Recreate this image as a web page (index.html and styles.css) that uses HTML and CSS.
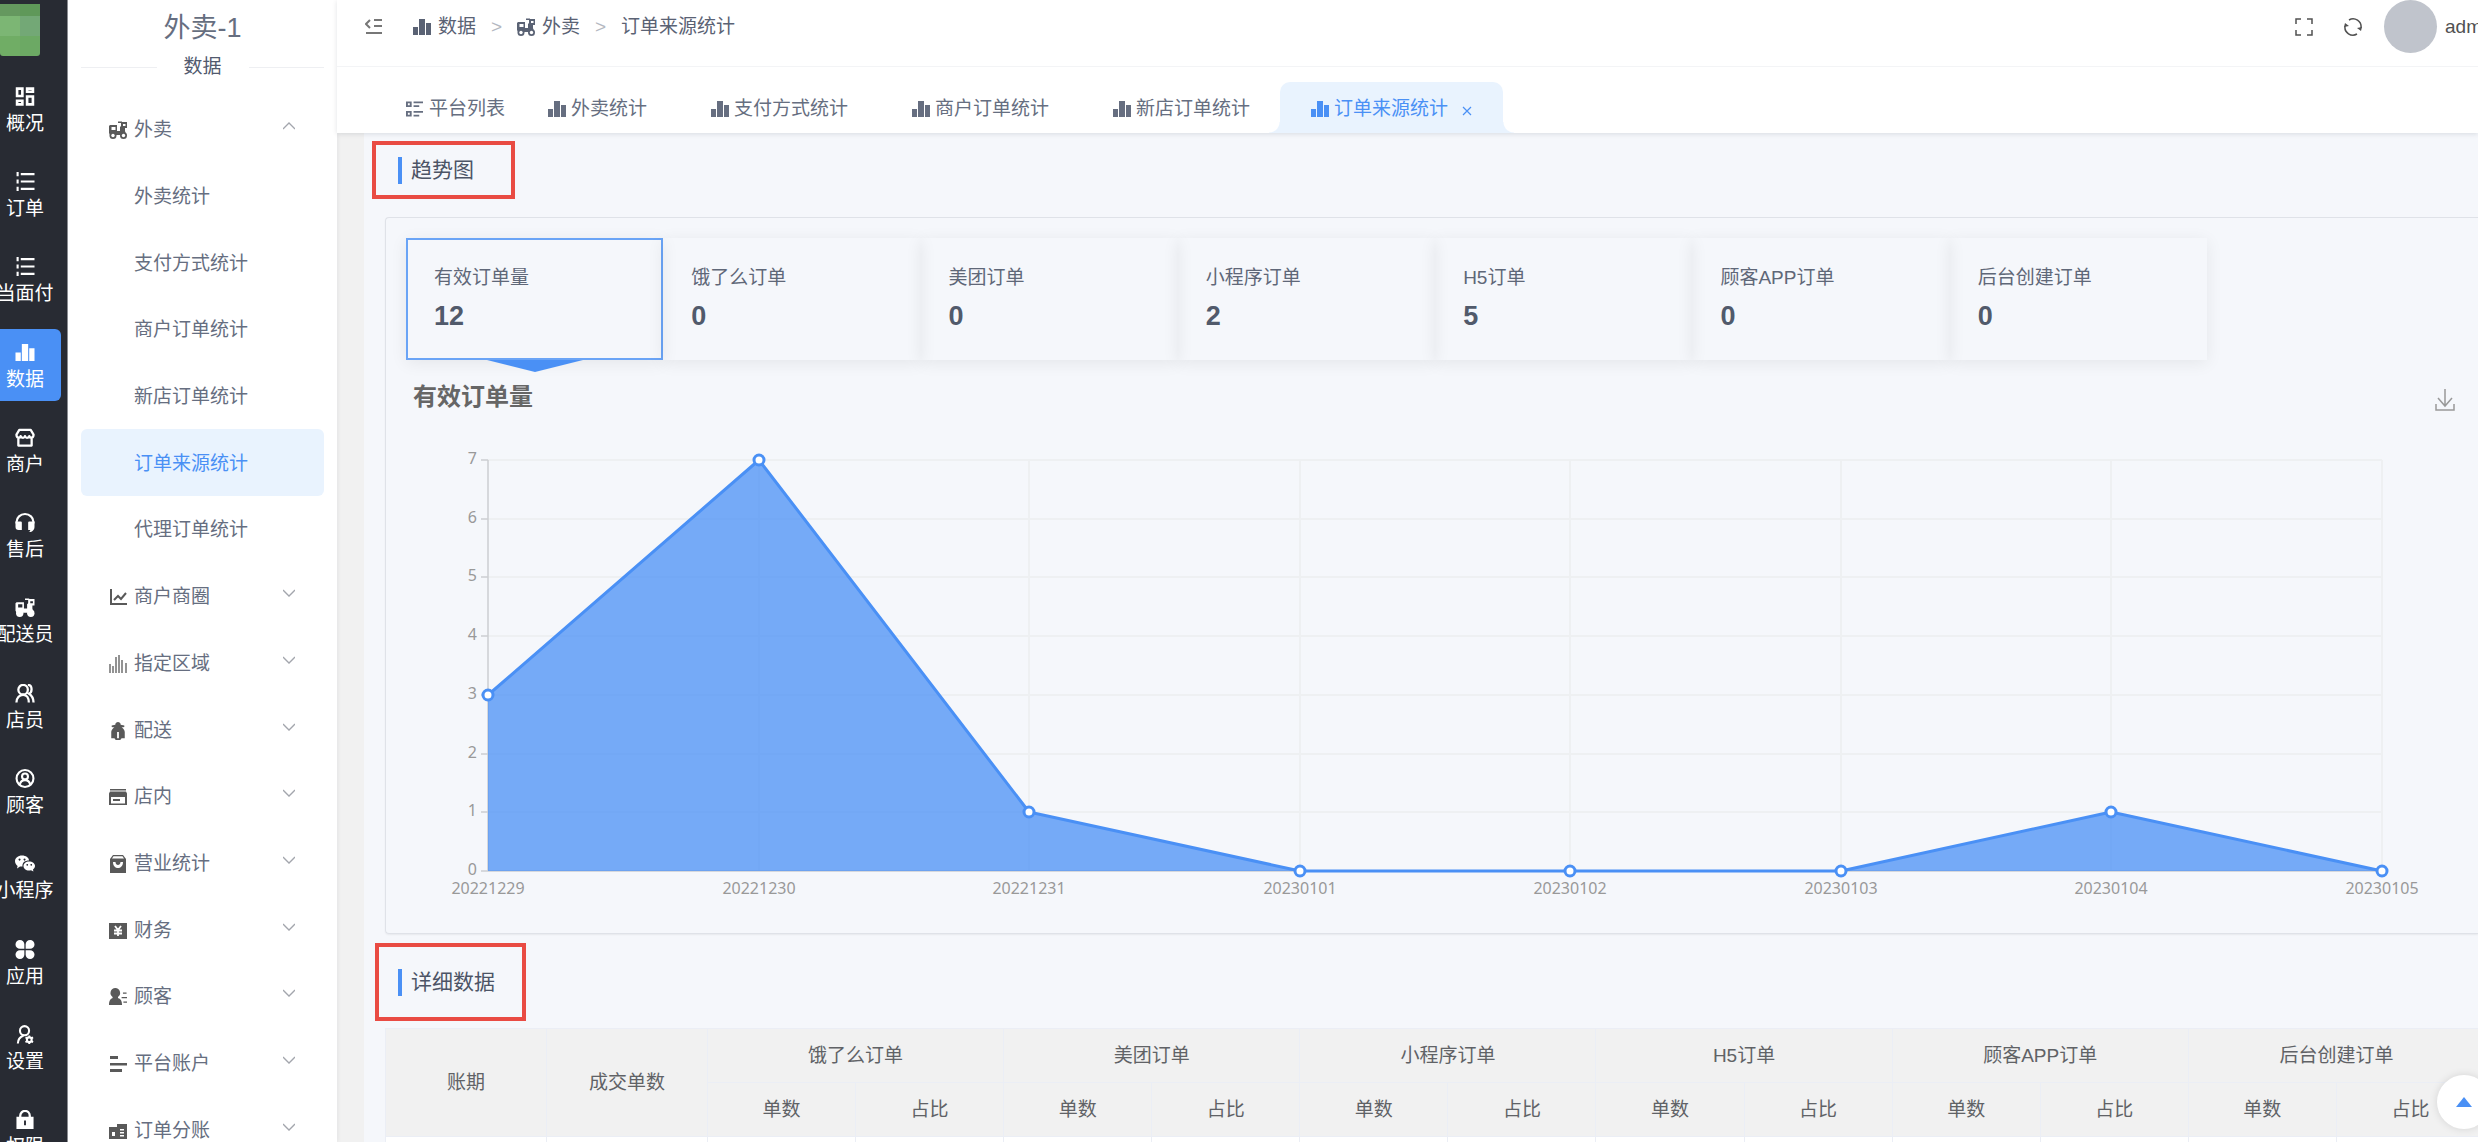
FILE: index.html
```html
<!DOCTYPE html>
<html lang="zh-CN">
<head>
<meta charset="utf-8">
<title>订单来源统计</title>
<link rel="stylesheet" href="styles.css">
</head>
<body>
<svg class="sprite" aria-hidden="true">
  <symbol id="i-grid" viewBox="0 0 18 18"><g fill="none" stroke="currentColor" stroke-width="2.500"><path d="M1.500 1.500h5v7h-5zM11 1.500h5.500v3H11zM1.500 13h5v3.500h-5zM11 9h5.500v7.500H11z"/></g></symbol>
  <symbol id="i-list" viewBox="0 0 18 18"><path fill="currentColor" d="M1 0h2v4H1zM5 1h13v2H5zM1 7h2v4H1zM5 8h13v2H5zM1 14h2v4H1zM5 15h13v2H5z"/></symbol>
  <symbol id="i-bars" viewBox="0 0 18 18"><path fill="currentColor" d="M0 9h5v8H0zM6 1h6v16H6zM13 5h5v12h-5z"/></symbol>
  <symbol id="i-shop" viewBox="0 0 20 20"><g fill="none" stroke="currentColor" stroke-width="2.400" stroke-linejoin="round"><path d="M4 2h12l3 5c0 4-4 4-4.500 1.500C13.500 11 10.500 11 10 8.500 9.500 11 6.500 11 5.500 8.500 5 11 1 11 1 7zM3 11v7.500h14V11"/></g></symbol>
  <symbol id="i-headset" viewBox="0 0 18 18"><path fill="none" stroke="currentColor" stroke-width="2" d="M1 10V8.500a8 7.500 0 0 1 16 0V10"/><path fill="currentColor" d="M0 8h5a1 1 0 0 1 1 1v7H3a3 3 0 0 1-3-3zM18 8h-5a1 1 0 0 0-1 1v7h2c0 2-2 2-2 2h1c3 0 5-2 5-5z"/></symbol>
  <symbol id="i-scooter" viewBox="0 0 18 18"><path fill="currentColor" fill-rule="evenodd" d="M1 4h7v6h3V6l1-1V2H9V.5h4V1h5v6h-2v3l1 4H1L0 12V5zM2.500 6v3h4V6zM14 3v2h2.500V3z"/><circle cx="4" cy="14.500" r="3.500" fill="currentColor"/><circle cx="14.500" cy="14.500" r="3.500" fill="currentColor"/><circle class="hub" cx="4" cy="14.500" r="1.700"/><circle class="hub" cx="14.500" cy="14.500" r="1.700"/></symbol>
  <symbol id="i-users" viewBox="0 0 20 20"><g fill="none" stroke="currentColor" stroke-width="2.400"><circle cx="8" cy="6" r="5"/><path d="M1 19.500c0-5 3-8 7-8s6 3 6 8M13 1c5 0 5 8 1 9 3 2 5 4 5 9.500"/></g></symbol>
  <symbol id="i-user-circle" viewBox="0 0 18 18"><g fill="none" stroke="currentColor" stroke-width="2"><circle cx="9" cy="9" r="8"/><circle cx="9" cy="7" r="2.800"/><path d="M4 15c1-6 9-6 10 0"/></g></symbol>
  <symbol id="i-wechat" viewBox="0 0 20 18"><path fill="currentColor" fill-rule="evenodd" d="M7 1c4 0 7 2.300 7 5-4 0-7 2-6.500 6H5l-3 2 .6-2.500C1 10.500 0 8.500 0 6.800 0 3.500 3 1 7 1zM4.500 4a1 1 0 1 0 .1 0zM9.500 4a1 1 0 1 0 .1 0zM14 7c3.500 0 6 2 6 4.500 0 1.500-1 2.700-2 3.500l.4 2-2.400-1.200C12 17 8.500 14.500 8.500 11.500 8.500 9 11 7 14 7zM12.200 9.500a.8.8 0 1 0 .1 0zM16.200 9.500a.8.8 0 1 0 .1 0z"/></symbol>
  <symbol id="i-apps" viewBox="0 0 18 18"><path fill="currentColor" d="M4.200 0a4.200 4.200 0 0 1 4.200 4.200v4.200H4.200a4.200 4.200 0 0 1 0-8.400zM13.800 0a4.200 4.200 0 0 1 0 8.400H9.600V4.200A4.200 4.200 0 0 1 13.800 0zM4.200 9.600h4.200v4.200a4.200 4.200 0 1 1-4.200-4.200zM9.600 9.600h4.200a4.200 4.200 0 1 1-4.200 4.200z"/></symbol>
  <symbol id="i-user-cog" viewBox="0 0 18 20"><g fill="none" stroke="currentColor" stroke-width="2.200"><circle cx="8.500" cy="6" r="4.800"/><path d="M1.500 19.500c0-4 2-7 6-8.500"/><circle cx="13.500" cy="15.500" r="2.500"/></g><path stroke="currentColor" stroke-width="2" d="M13.500 11v2M13.500 18v2M9.500 13l2 1M15.500 17l2 1M17.500 13l-2 1M11.500 17l-2 1"/></symbol>
  <symbol id="i-lock" viewBox="0 0 18 20"><path fill="none" stroke="currentColor" stroke-width="2.400" d="M4 9V6a5 5 0 0 1 10 0v3"/><path fill="currentColor" fill-rule="evenodd" d="M0 7h18v13H0zM8 11v5h2v-5z"/></symbol>
  <symbol id="i-trend" viewBox="0 0 18 18"><path fill="none" stroke="currentColor" stroke-width="2" d="M2 1v15h16M5 12l4-4 3 3 5-6"/></symbol>
  <symbol id="i-columns" viewBox="0 0 18 18"><path fill="currentColor" opacity=".65" d="M0 9h2v9H0zM3 11h2v7H3zM6 2h2v16H6zM9 0h2v18H9zM12 5h2v13h-2zM16 8h2v10h-2z"/></symbol>
  <symbol id="i-courier" viewBox="0 0 18 20"><path fill="currentColor" fill-rule="evenodd" d="M6 3c0-4 6-4 6 0l4 1v1.500l-3 .5c2 1 3.500 3 3.500 5v7H13l-1.500 2h-5L5 18H1.500v-7c0-2 1.500-4 3.500-5l-3-.5V4zM8 11v7h2v-7z"/></symbol>
  <symbol id="i-card" viewBox="0 0 18 18"><path fill="currentColor" fill-rule="evenodd" d="M1 1h16v1.500H1zM1 3.500h16l1 2V17H0V5.500zM2 9v6.500h14V9zM4 11h7v2H4z"/></symbol>
  <symbol id="i-bag" viewBox="0 0 18 18"><path fill="currentColor" fill-rule="evenodd" d="M4 0h10l3 4v14H1V4zM4.500 1.200L3 3.500h12l-1.500-2.300zM4 7h2.500c0 4 5 4 5 0H14c0 8-10 8-10 0z"/></symbol>
  <symbol id="i-yen" viewBox="0 0 18 18"><path fill="currentColor" d="M0 1h18v16H0z"/><path fill="none" stroke="#fff" stroke-width="1.800" d="M6 4l3 4 3-4M9 8v6M5 8.500h8M5 11.500h8"/></symbol>
  <symbol id="i-member" viewBox="0 0 20 20"><path fill="currentColor" d="M7 0a5.500 5.500 0 0 1 3 10v1c3 1 4.500 3 4.500 8H0c0-5 1.500-7 4-8v-1A5.500 5.500 0 0 1 7 0zM15.500 5h4v1.500h-4zM14 10h6v1.500h-6zM16 15h4v1.500h-4z"/></symbol>
  <symbol id="i-lines" viewBox="0 0 18 18"><path fill="currentColor" d="M1 1h8v3H1zM1 8h17v2.500H1zM1 14h12v3H1z"/></symbol>
  <symbol id="i-split" viewBox="0 0 18 18"><path fill="currentColor" fill-rule="evenodd" d="M0 5h8V2h10v15H0zM3 10v4h3v-4zM11 7v1.500h4V7zM11 10v1.500h4V10zM11 13v1.500h4V13z"/></symbol>
  <symbol id="i-fold" viewBox="0 0 18 16"><path fill="none" stroke="currentColor" stroke-width="2" d="M5 1L1 5l4 4M9 1h8M9 7h8M1 14h16"/></symbol>
  <symbol id="i-platform" viewBox="0 0 18 18"><path fill="none" stroke="currentColor" stroke-width="2" d="M1 2h4v4H1zM1 12h4v4H1zM8 2h10M8 6h6M8 12h10M8 16h6"/></symbol>
  <symbol id="i-full" viewBox="0 0 18 18"><path fill="none" stroke="currentColor" stroke-width="1.500" d="M1 6V1h5M12 1h5v5M17 12v5h-5M6 17H1v-5"/></symbol>
  <symbol id="i-refresh" viewBox="0 0 18 18"><path fill="none" stroke="currentColor" stroke-width="1.500" d="M5 2a8 8 0 0 1 12 8M13 16A8 8 0 0 1 1 8"/><path fill="currentColor" d="M0 9l1-4 4 3zM18 9l-1 4-4-3z"/></symbol>
  <symbol id="i-down" viewBox="0 0 12 8"><path fill="none" stroke="currentColor" stroke-width="1.300" d="M0 1l6 6 6-6"/></symbol>
  <symbol id="i-up" viewBox="0 0 12 8"><path fill="none" stroke="currentColor" stroke-width="1.300" d="M0 7l6-6 6 6"/></symbol>
  <symbol id="i-close" viewBox="0 0 10 10"><path fill="none" stroke="currentColor" stroke-width="1.200" d="M1 1l8 8M9 1L1 9"/></symbol>
  <symbol id="i-download" viewBox="0 0 20 22"><path fill="none" stroke="currentColor" stroke-width="1.500" d="M10 0v17M3 9l7 8 7-8M1 15v6h18v-6"/></symbol>
</svg>

<div class="app">
  <nav class="rail" aria-label="主导航">
    <div class="logo"><i></i><i></i><i></i><i></i><i></i><i></i></div>
    <ul class="rail-list">
      <li><a class="rail-item" href="#"><svg class="icon"><use href="#i-grid"/></svg>概况</a></li>
      <li><a class="rail-item" href="#"><svg class="icon"><use href="#i-list"/></svg>订单</a></li>
      <li><a class="rail-item" href="#"><svg class="icon"><use href="#i-list"/></svg>当面付</a></li>
      <li><a class="rail-item active" href="#"><svg class="icon"><use href="#i-bars"/></svg>数据</a></li>
      <li><a class="rail-item" href="#"><svg class="icon"><use href="#i-shop"/></svg>商户</a></li>
      <li><a class="rail-item" href="#"><svg class="icon"><use href="#i-headset"/></svg>售后</a></li>
      <li><a class="rail-item" href="#"><svg class="icon"><use href="#i-scooter"/></svg>配送员</a></li>
      <li><a class="rail-item" href="#"><svg class="icon"><use href="#i-users"/></svg>店员</a></li>
      <li><a class="rail-item" href="#"><svg class="icon"><use href="#i-user-circle"/></svg>顾客</a></li>
      <li><a class="rail-item" href="#"><svg class="icon"><use href="#i-wechat"/></svg>小程序</a></li>
      <li><a class="rail-item" href="#"><svg class="icon"><use href="#i-apps"/></svg>应用</a></li>
      <li><a class="rail-item" href="#"><svg class="icon"><use href="#i-user-cog"/></svg>设置</a></li>
      <li><a class="rail-item" href="#"><svg class="icon"><use href="#i-lock"/></svg>权限</a></li>
    </ul>
  </nav>

  <aside class="side">
    <h1 class="side-title">外卖-1</h1>
    <div class="side-divider">数据</div>
    <ul class="menu">
      <li class="group-open">
        <button class="menu-row" type="button"><svg class="icon"><use href="#i-scooter"/></svg><span>外卖</span><svg class="chev"><use href="#i-up"/></svg></button>
        <ul class="submenu">
          <li><a class="sub-row" href="#">外卖统计</a></li>
          <li><a class="sub-row" href="#">支付方式统计</a></li>
          <li><a class="sub-row" href="#">商户订单统计</a></li>
          <li><a class="sub-row" href="#">新店订单统计</a></li>
          <li><a class="sub-row active" href="#">订单来源统计</a></li>
          <li><a class="sub-row" href="#">代理订单统计</a></li>
        </ul>
      </li>
      <li><button class="menu-row" type="button"><svg class="icon"><use href="#i-trend"/></svg><span>商户商圈</span><svg class="chev"><use href="#i-down"/></svg></button></li>
      <li><button class="menu-row" type="button"><svg class="icon"><use href="#i-columns"/></svg><span>指定区域</span><svg class="chev"><use href="#i-down"/></svg></button></li>
      <li><button class="menu-row" type="button"><svg class="icon"><use href="#i-courier"/></svg><span>配送</span><svg class="chev"><use href="#i-down"/></svg></button></li>
      <li><button class="menu-row" type="button"><svg class="icon"><use href="#i-card"/></svg><span>店内</span><svg class="chev"><use href="#i-down"/></svg></button></li>
      <li><button class="menu-row" type="button"><svg class="icon"><use href="#i-bag"/></svg><span>营业统计</span><svg class="chev"><use href="#i-down"/></svg></button></li>
      <li><button class="menu-row" type="button"><svg class="icon"><use href="#i-yen"/></svg><span>财务</span><svg class="chev"><use href="#i-down"/></svg></button></li>
      <li><button class="menu-row" type="button"><svg class="icon"><use href="#i-member"/></svg><span>顾客</span><svg class="chev"><use href="#i-down"/></svg></button></li>
      <li><button class="menu-row" type="button"><svg class="icon"><use href="#i-lines"/></svg><span>平台账户</span><svg class="chev"><use href="#i-down"/></svg></button></li>
      <li><button class="menu-row" type="button"><svg class="icon"><use href="#i-split"/></svg><span>订单分账</span><svg class="chev"><use href="#i-down"/></svg></button></li>
    </ul>
  </aside>

  <div class="main">
    <header class="header">
      <div class="topbar">
        <button class="fold" type="button" aria-label="收起菜单"><svg><use href="#i-fold"/></svg></button>
        <nav class="crumbs" aria-label="面包屑">
          <a href="#"><svg class="icon"><use href="#i-bars"/></svg>数据</a><span class="sep">&gt;</span>
          <a href="#"><svg class="icon"><use href="#i-scooter"/></svg>外卖</a><span class="sep">&gt;</span>
          <a href="#">订单来源统计</a>
        </nav>
        <div class="tools">
          <button type="button" aria-label="全屏"><svg class="icon"><use href="#i-full"/></svg></button>
          <button type="button" aria-label="刷新"><svg class="icon"><use href="#i-refresh"/></svg></button>
          <a class="account" href="#"><span class="avatar"></span>admin</a>
        </div>
      </div>
      <nav class="tabs" aria-label="页签">
        <a class="tab pinned" href="#"><svg class="icon"><use href="#i-platform"/></svg>平台列表</a>
        <a class="tab" href="#"><svg class="icon"><use href="#i-bars"/></svg>外卖统计<svg class="close"><use href="#i-close"/></svg></a>
        <a class="tab" href="#"><svg class="icon"><use href="#i-bars"/></svg>支付方式统计<svg class="close"><use href="#i-close"/></svg></a>
        <a class="tab" href="#"><svg class="icon"><use href="#i-bars"/></svg>商户订单统计<svg class="close"><use href="#i-close"/></svg></a>
        <a class="tab" href="#"><svg class="icon"><use href="#i-bars"/></svg>新店订单统计<svg class="close"><use href="#i-close"/></svg></a>
        <a class="tab active" href="#"><svg class="icon"><use href="#i-bars"/></svg>订单来源统计<svg class="close"><use href="#i-close"/></svg></a>
      </nav>
    </header>

    <main class="content">
      <h2 class="section-title marked">趋势图</h2>
      <section class="card">
        <div class="stats">
          <button class="stat active" type="button"><span>有效订单量</span><b>12</b></button>
          <button class="stat" type="button"><span>饿了么订单</span><b>0</b></button>
          <button class="stat" type="button"><span>美团订单</span><b>0</b></button>
          <button class="stat" type="button"><span>小程序订单</span><b>2</b></button>
          <button class="stat" type="button"><span>H5订单</span><b>5</b></button>
          <button class="stat" type="button"><span>顾客APP订单</span><b>0</b></button>
          <button class="stat" type="button"><span>后台创建订单</span><b>0</b></button>
        </div>
        <div class="chart-head">
          <h3>有效订单量</h3>
          <button type="button" aria-label="下载"><svg><use href="#i-download"/></svg></button>
        </div>
        <svg class="chart" viewBox="0 0 2072 512" role="img" aria-label="有效订单量趋势">
          <g class="grid-lines"><path d="M82 39H1976M82 98H1976M82 156H1976M82 215H1976M82 274H1976M82 333H1976M82 391H1976M353 39V450M623 39V450M894 39V450M1164 39V450M1435 39V450M1705 39V450M1976 39V450"/></g>
          <g class="axis-lines"><path d="M82 39V450H1976M75 39h7M75 98h7M75 156h7M75 215h7M75 274h7M75 333h7M75 391h7M75 450h7"/></g>
          <path class="area" d="M82 274L353 39 623 391 894 450H1435L1705 391 1976 450H82z"/>
          <path class="line" d="M82 274L353 39 623 391 894 450H1435L1705 391 1976 450"/>
          <g class="dots"><circle cx="82" cy="274" r="5"/><circle cx="353" cy="39" r="5"/><circle cx="623" cy="391" r="5"/><circle cx="894" cy="450" r="5"/><circle cx="1164" cy="450" r="5"/><circle cx="1435" cy="450" r="5"/><circle cx="1705" cy="391" r="5"/><circle cx="1976" cy="450" r="5"/></g>
          <g class="labels end"><text x="71" y="43">7</text><text x="71" y="102">6</text><text x="71" y="160">5</text><text x="71" y="219">4</text><text x="71" y="278">3</text><text x="71" y="337">2</text><text x="71" y="395">1</text><text x="71" y="454">0</text></g>
          <g class="labels mid"><text x="82" y="473">20221229</text><text x="353" y="473">20221230</text><text x="623" y="473">20221231</text><text x="894" y="473">20230101</text><text x="1164" y="473">20230102</text><text x="1435" y="473">20230103</text><text x="1705" y="473">20230104</text><text x="1976" y="473">20230105</text></g>
        </svg>
      </section>
      <h2 class="section-title marked tall">详细数据</h2>
      <table class="data">
        <colgroup><col class="wide"><col class="wide"><col span="12"></colgroup>
        <thead>
          <tr><th rowspan="2">账期</th><th rowspan="2">成交单数</th><th colspan="2">饿了么订单</th><th colspan="2">美团订单</th><th colspan="2">小程序订单</th><th colspan="2">H5订单</th><th colspan="2">顾客APP订单</th><th colspan="2">后台创建订单</th></tr>
          <tr><th>单数</th><th>占比</th><th>单数</th><th>占比</th><th>单数</th><th>占比</th><th>单数</th><th>占比</th><th>单数</th><th>占比</th><th>单数</th><th>占比</th></tr>
        </thead>
        <tbody>
          <tr><td></td><td></td><td></td><td></td><td></td><td></td><td></td><td></td><td></td><td></td><td></td><td></td><td></td><td></td></tr>
        </tbody>
      </table>
    </main>
  </div>
</div>
<button class="to-top" type="button" aria-label="回到顶部"></button>
</body>
</html>
```
FILE: styles.css
```css
* { box-sizing: border-box; }
html, body { height: 100%; }
body {
  margin: 0;
  overflow: hidden;
  font: 19px/28px "Liberation Sans", "Noto Sans CJK SC", sans-serif;
  color: #666e80;
  background: #f5f7fb;
}
ul { list-style: none; margin: 0; padding: 0; }
h1, h2, h3 { margin: 0; font-weight: 400; }
a { color: inherit; text-decoration: none; }
button { font: inherit; color: inherit; background: none; border: 0; padding: 0; margin: 0; text-align: left; cursor: pointer; }
svg { display: block; }
.sprite { position: absolute; width: 0; height: 0; }
.icon { width: 18px; height: 18px; flex: none; }
.hub { fill: #fff; }

.app { display: flex; height: 100vh; overflow: hidden; }

/* dark rail */
.rail { flex: none; width: 68px; background: #282b33; border-right: 1px solid #8c8e93; overflow: hidden; color: #fff; }
.logo { display: grid; grid-template: 12px 20px 20px / 20px 20px; width: 40px; margin: 4px 0 10px; border-radius: 0 0 3px 3px; overflow: hidden; }
.logo i { background: #6ca964; }
.logo i:nth-child(1) { background: #65985f; }
.logo i:nth-child(2) { background: #5f9859; }
.logo i:nth-child(3) { background: #7cb674; }
.logo i:nth-child(4) { background: #73a876; }
.logo i:nth-child(5) { background: #70ad65; }
.rail-list { display: grid; grid-template-rows: repeat(13, 1fr); height: 1109px; width: 72px; margin-left: -11px; }
.rail-list li { display: flex; align-items: center; }
.rail-item { display: flex; flex-direction: column; align-items: center; gap: 4px; width: 72px; height: 72px; padding-top: 14px; border-radius: 6px; }
.rail-item .icon { width: 20px; height: 19px; }
.rail-item .hub { fill: #282b33; }
.rail-item.active { background: #4a90f5; }

/* side menu */
.side { flex: none; width: 269px; background: #fff; box-shadow: 1px 0 4px rgba(0, 21, 41, .06); z-index: 1; }
.side-title { height: 53px; font-size: 27px; line-height: 56px; text-align: center; }
.side-divider { display: flex; align-items: center; gap: 27px; padding: 0 13px; line-height: 28px; color: #515a6e; }
.side-divider::before, .side-divider::after { content: ""; flex: 1; height: 1px; background: #eeeff2; }
.menu { display: grid; grid-template-rows: repeat(16, 1fr); height: 1067px; margin-top: 15px; padding: 0 13px; }
.menu > li, .submenu > li { display: grid; min-height: 0; }
.menu > .group-open { grid-row: span 7; grid-template-rows: 1fr 6fr; }
.submenu { display: grid; grid-template-rows: repeat(6, 1fr); }
.menu-row { display: flex; align-items: center; gap: 7px; padding: 2px 29px 0 28px; }
.menu-row .icon { color: #595959; }
.chev { width: 12px; height: 8px; margin: 0 0 8px auto; color: #a3a6ad; }
.sub-row { display: flex; align-items: center; padding: 2px 0 0 53px; border-radius: 6px; }
.sub-row.active { color: #4a90f5; background: #e9f3fe; }

/* header */
.main { flex: 1; min-width: 0; display: flex; flex-direction: column; background: #f1f1f1; }
.header { flex: none; background: #fff; box-shadow: 0 1px 5px rgba(0, 21, 41, .12); z-index: 1; }
.topbar { display: flex; height: 67px; padding: 0 0 13px 28px; border-bottom: 1px solid #f3f4f6; align-items: center; }
.fold svg { width: 18px; height: 16px; color: #777; }
.crumbs { display: flex; align-items: center; margin-left: 30px; color: #5a6274; }
.crumbs a { display: flex; align-items: center; gap: 7px; }
.crumbs .sep { width: 41px; padding-left: 15px; color: #b4b8c1; }
.tools { display: flex; align-items: center; gap: 31px; margin-left: auto; width: 183px; color: #515151; flex: none; }
.account { display: flex; align-items: center; gap: 8px; margin-left: -9px; }
.avatar { width: 53px; height: 53px; border-radius: 50%; background: #c0c4cc; flex: none; }
.tabs { display: flex; height: 66px; padding: 15px 0 0 49px; }
.tab { display: flex; align-items: center; height: 51px; padding: 2px 20px 0; white-space: nowrap; color: #666e80; }
.tab .icon { margin-right: 5px; }
.tab.pinned { padding-right: 23px; }
.tab.pinned .icon { width: 17px; margin-right: 6px; }
.close { width: 10px; height: 10px; margin: 4px 0 0 14px; visibility: hidden; }
.tab.active { position: relative; margin-left: -14px; padding: 2px 31px 0; color: #4a90f5; background: #e9f3fe; border-radius: 10px 10px 0 0; }
.tab.active .close { visibility: visible; }
.tab.active::before, .tab.active::after { content: ""; position: absolute; bottom: 0; width: 11px; height: 11px; }
.tab.active::before { right: 100%; background: radial-gradient(circle at 0 0, transparent 10px, #e9f3fe 11px); }
.tab.active::after { left: 100%; background: radial-gradient(circle at 100% 0, transparent 10px, #e9f3fe 11px); }

/* content */
.content { flex: 1; min-height: 0; overflow: hidden; margin-left: 27px; padding: 8px 0 0 8px; background: #f5f7fb; }
.section-title { display: flex; width: 143px; height: 58px; align-items: center; gap: 9px; padding-left: 22px; font-size: 21px; color: #4c5466; }
.section-title::before { content: ""; width: 4px; height: 27px; background: #4a90f5; }
.marked { border: 4px solid #e94b43; }
.section-title.tall { width: 151px; height: 78px; margin: 9px 0 0 3px; padding-left: 19px; }
.card { margin: 18px 0 0 13px; padding: 20px 0 0 20px; border: 1px solid #dfe2e8; border-right: 0; border-radius: 4px 0 0 4px; box-shadow: 0 1px 2px rgba(0, 0, 0, .06); }
.stats { display: flex; max-width: 1801px; }
.stat { position: relative; flex: 1; display: flex; flex-direction: column; height: 122px; padding: 26px 28px 0; gap: 10px; color: #5f6778; box-shadow: 0 3px 16px rgba(0, 0, 0, .07); }
.stat b { font-size: 27px; color: #515a6b; }
.stat.active { padding: 24px 26px 0; border: 2px solid #6aa4f6; }
.stat.active::after { content: ""; position: absolute; top: 120px; left: 79px; width: 96px; height: 12px; background: #4a90f5; clip-path: polygon(0 0, 100% 0, 50% 100%); }
.chart-head { display: flex; justify-content: space-between; align-items: center; height: 48px; margin-top: 13px; padding: 0 23px 0 7px; }
.chart-head h3 { font-size: 24px; font-weight: 700; color: #666; }
.chart-head button { align-self: end; padding-bottom: 10px; }
.chart-head svg { width: 20px; height: 22px; color: #999; }
.chart { width: 100%; height: auto; }
.grid-lines { stroke: #eef0f2; stroke-width: 2; }
.axis-lines { fill: none; stroke: #ccced2; stroke-width: 1.5; }
.area { fill: #4a90f5; fill-opacity: .75; }
.line { fill: none; stroke: #4a90f5; stroke-width: 3; stroke-linejoin: round; }
.dots { fill: #fff; stroke: #4a90f5; stroke-width: 3; }
.labels { font: 16px "Noto Sans", sans-serif; fill: #999; }
.labels.end { text-anchor: end; }
.labels.mid { text-anchor: middle; }

/* table */
.data { width: calc(100% - 6px); margin: 7px 0 0 13px; border-collapse: collapse; table-layout: fixed; background: #fff; color: #606266; }
.data .wide { width: 161px; }
.data th, .data td { height: 54px; padding: 1px 0 0; border: 1px solid #ebeef5; font-weight: 400; text-align: center; }
.data th { background: #f1f1f1; }

.to-top { position: fixed; right: -13px; bottom: 13px; z-index: 2; display: grid; place-items: center; width: 54px; height: 54px; border-radius: 50%; background: #fff; box-shadow: 0 0 8px rgba(0, 0, 0, .12); }
.to-top::before { content: ""; width: 16px; height: 10px; background: #4a90f5; clip-path: polygon(50% 0, 100% 100%, 0 100%); }
```
